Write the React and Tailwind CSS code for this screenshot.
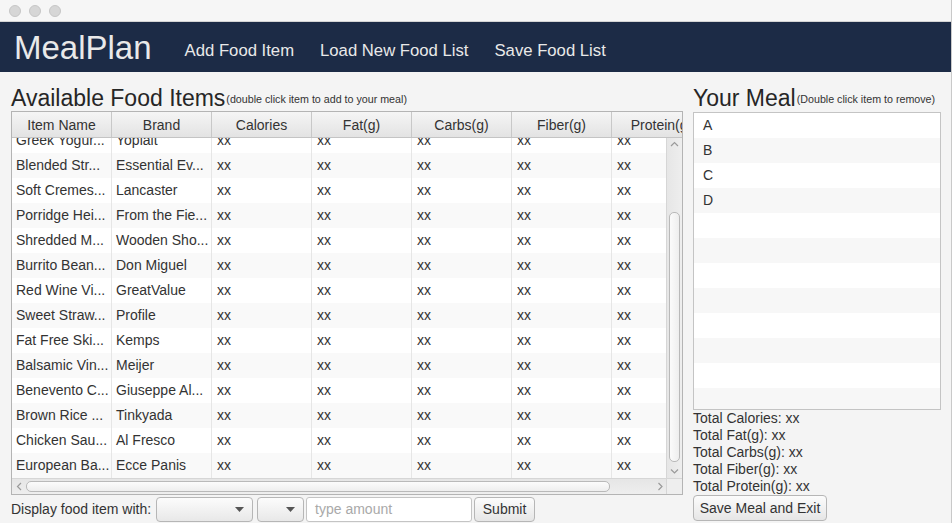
import React from "react";

const rows = [
  ["Greek Yogur...", "Yoplait"],
  ["Blended Str...", "Essential Ev..."],
  ["Soft Cremes...", "Lancaster"],
  ["Porridge Hei...", "From the Fie..."],
  ["Shredded M...", "Wooden Sho..."],
  ["Burrito Bean...", "Don Miguel"],
  ["Red Wine Vi...", "GreatValue"],
  ["Sweet Straw...", "Profile"],
  ["Fat Free Ski...", "Kemps"],
  ["Balsamic Vin...", "Meijer"],
  ["Benevento C...", "Giuseppe Al..."],
  ["Brown Rice ...", "Tinkyada"],
  ["Chicken Sau...", "Al Fresco"],
  ["European Ba...", "Ecce Panis"],
];

const headers = ["Item Name", "Brand", "Calories", "Fat(g)", "Carbs(g)", "Fiber(g)", "Protein(g)"];

function Chevron({ dir }) {
  const paths = {
    up: "M1 5 L4.5 1.5 L8 5",
    down: "M1 1.5 L4.5 5 L8 1.5",
    left: "M5 1 L1.5 4.5 L5 8",
    right: "M1.5 1 L5 4.5 L1.5 8",
  };
  const horiz = dir === "left" || dir === "right";
  return (
    <svg width={horiz ? 7 : 9} height={horiz ? 9 : 7} viewBox={horiz ? "0 0 7 9" : "0 0 9 7"}>
      <path d={paths[dir]} fill="none" stroke="#9a9a9a" strokeWidth="1.2" />
    </svg>
  );
}

function Caret() {
  return (
    <svg width="9" height="5" viewBox="0 0 9 5">
      <path d="M0 0 L9 0 L4.5 5 Z" fill="#555" />
    </svg>
  );
}

export default function App() {
  const font = { fontFamily: '"Liberation Sans", Arial, sans-serif' };
  return (
    <div className="w-[952px] h-[523px] overflow-hidden bg-[#f4f4f4] text-[#333] border-r border-[#c9c9c9] flex flex-col" style={font}>
      {/* Title bar */}
      <div className="h-[22px] shrink-0 bg-[#f6f6f6] border-b border-[#d4d4d4] flex items-center pl-[9px] gap-[8px]">
        <div className="w-[12px] h-[12px] rounded-full bg-[#d6d6d6] border border-[#c6c6c6]" />
        <div className="w-[12px] h-[12px] rounded-full bg-[#d6d6d6] border border-[#c6c6c6]" />
        <div className="w-[12px] h-[12px] rounded-full bg-[#d6d6d6] border border-[#c6c6c6]" />
      </div>
      {/* Header */}
      <div className="h-[50px] shrink-0 bg-[#1c2b46] flex items-center text-[#e9e9e9]">
        <div className="ml-[14px] text-[33px] leading-none">MealPlan</div>
        <div className="ml-[33px] text-[16.7px] pt-[7px]">Add Food Item</div>
        <div className="ml-[26px] text-[16.7px] pt-[7px]">Load New Food List</div>
        <div className="ml-[26px] text-[16.7px] pt-[7px]">Save Food List</div>
      </div>
      {/* Main */}
      <div className="flex-1 flex pl-[11px] pt-[12px] gap-[10px]">
        {/* Left */}
        <div className="w-[672px] flex flex-col">
          <div className="h-[27px] flex items-end whitespace-nowrap">
            <span className="text-[23px] leading-[26px] text-[#262626]">Available Food Items</span>
            <span className="text-[10.7px] leading-[14px] mb-[5px] ml-[1px] text-[#333]">(double click item to add to your meal)</span>
          </div>
          {/* Table */}
          <div className="w-[672px] h-[384px] border border-[#b4b4b4] bg-white flex flex-col overflow-hidden">
            <div className="h-[26px] shrink-0 flex overflow-hidden border-b border-[#c4c4c4]">
              {headers.map((h) => (
                <div
                  key={h}
                  className="w-[100px] shrink-0 border-r border-[#c8c8c8] bg-gradient-to-b from-[#f5f5f5] to-[#e3e3e3] flex items-center justify-center text-[14px] whitespace-nowrap pt-[1px]"
                >
                  {h}
                </div>
              ))}
            </div>
            <div className="flex h-[340px]">
              <div className="w-[654px] overflow-hidden">
                <div className="-mt-[10px]">
                  {rows.map((r, i) => (
                    <div key={i} className={`h-[25px] flex text-[14px] ${i % 2 === 1 ? "bg-[#f9f9f9]" : "bg-white"}`}>
                      <div className="w-[100px] shrink-0 border-r border-[#e6e6e6] pl-[4px] flex items-center whitespace-nowrap overflow-hidden">{r[0]}</div>
                      <div className="w-[100px] shrink-0 border-r border-[#e6e6e6] pl-[4px] flex items-center whitespace-nowrap overflow-hidden">{r[1]}</div>
                      <div className="w-[100px] shrink-0 border-r border-[#e6e6e6] pl-[5px] flex items-center">xx</div>
                      <div className="w-[100px] shrink-0 border-r border-[#e6e6e6] pl-[5px] flex items-center">xx</div>
                      <div className="w-[100px] shrink-0 border-r border-[#e6e6e6] pl-[5px] flex items-center">xx</div>
                      <div className="w-[100px] shrink-0 border-r border-[#e6e6e6] pl-[5px] flex items-center">xx</div>
                      <div className="w-[100px] shrink-0 border-r border-[#e6e6e6] pl-[5px] flex items-center">xx</div>
                    </div>
                  ))}
                </div>
              </div>
              {/* vertical scrollbar */}
              <div className="w-[16px] bg-gradient-to-r from-[#e6e6e6] to-[#eeeeee] border-l border-[#d6d6d6] flex flex-col items-center">
                <div className="h-[12px] flex items-center justify-center mt-[1px]"><Chevron dir="up" /></div>
                <div className="flex-1 w-full flex flex-col pt-[61px] pb-[4px] items-center">
                  <div className="w-[11px] h-[250px] rounded-[5px] bg-gradient-to-r from-[#fbfbfb] to-[#eeeeee] border border-[#b9b9b9]" />
                </div>
                <div className="h-[12px] flex items-center justify-center mb-[1px]"><Chevron dir="down" /></div>
              </div>
            </div>
            {/* horizontal scrollbar */}
            <div className="h-[16px] flex border-t border-[#d6d6d6]">
              <div className="w-[654px] bg-gradient-to-b from-[#e6e6e6] to-[#eeeeee] flex items-center">
                <div className="w-[14px] flex justify-center"><Chevron dir="left" /></div>
                <div className="w-[584px] h-[11px] rounded-[5px] bg-gradient-to-b from-[#fbfbfb] to-[#eeeeee] border border-[#b9b9b9]" />
                <div className="flex-1 flex justify-end pr-[2px]"><Chevron dir="right" /></div>
              </div>
              <div className="w-[16px] bg-[#eeeeee] border-l border-[#d6d6d6]" />
            </div>
          </div>
          {/* Bottom controls */}
          <div className="mt-[1px] flex items-center h-[26px] text-[14px]">
            <span className="whitespace-nowrap">Display food item with:</span>
            <div className="ml-[5px] w-[97px] h-[25px] rounded-[4px] border border-[#b6b6b6] bg-gradient-to-b from-[#fcfcfc] to-[#e8e8e8] flex items-center justify-end pr-[8px]">
              <Caret />
            </div>
            <div className="ml-[4px] w-[47px] h-[25px] rounded-[4px] border border-[#b6b6b6] bg-gradient-to-b from-[#fcfcfc] to-[#e8e8e8] flex items-center justify-end pr-[8px]">
              <Caret />
            </div>
            <div className="ml-[2px] w-[166px] h-[25px] rounded-[3px] border border-[#c4c4c4] bg-white flex items-center pl-[8px] text-[#a9a9a9]">
              type amount
            </div>
            <div className="ml-[2px] w-[61px] h-[25px] rounded-[4px] border border-[#b6b6b6] bg-gradient-to-b from-[#fcfcfc] to-[#e6e6e6] flex items-center justify-center">
              Submit
            </div>
          </div>
        </div>
        {/* Right */}
        <div className="w-[248px] flex flex-col">
          <div className="h-[27px] flex items-end whitespace-nowrap">
            <span className="text-[23px] leading-[26px] text-[#262626]">Your Meal</span>
            <span className="text-[10.7px] leading-[14px] mb-[5px] ml-[1px] text-[#333]">(Double click item to remove)</span>
          </div>
          <div className="mt-[1px] h-[298px] border border-[#c4c4c4] bg-white overflow-hidden">
            {["A", "B", "C", "D", "", "", "", "", "", "", "", "", ""].map((t, i) => (
              <div key={i} className={`h-[25px] flex items-center pl-[9px] text-[14px] ${i % 2 === 1 ? "bg-[#f7f7f7]" : "bg-white"}`}>
                {t}
              </div>
            ))}
          </div>
          <div className="text-[14px] leading-[17px]">
            <div>Total Calories: xx</div>
            <div>Total Fat(g): xx</div>
            <div>Total Carbs(g): xx</div>
            <div>Total Fiber(g): xx</div>
            <div>Total Protein(g): xx</div>
          </div>
          <div className="w-[134px] h-[26px] rounded-[4px] border border-[#b6b6b6] bg-gradient-to-b from-[#fcfcfc] to-[#e6e6e6] flex items-center justify-center text-[14px]">
            Save Meal and Exit
          </div>
        </div>
      </div>
    </div>
  );
}
